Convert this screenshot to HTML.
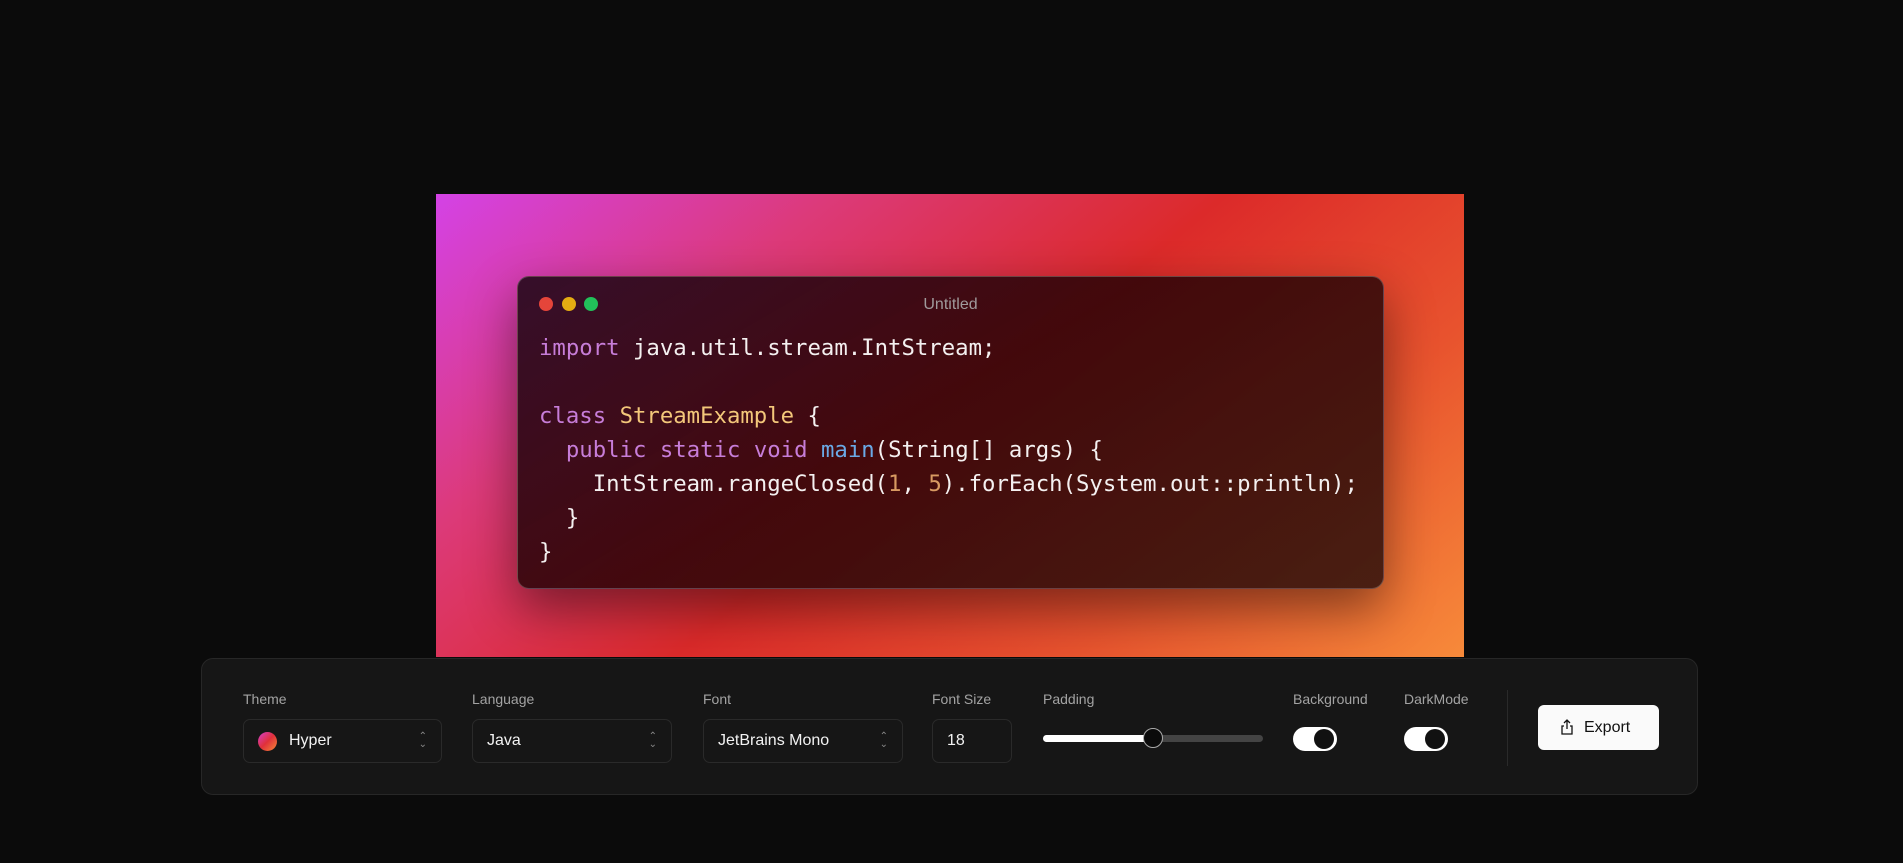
<!DOCTYPE html>
<html><head><meta charset="utf-8"><style>
*{box-sizing:border-box;margin:0;padding:0}
body{width:1903px;height:863px;background:#0b0b0b;position:relative;overflow:hidden;font-family:"Liberation Sans",sans-serif}
.bg{position:absolute;left:436px;top:194px;width:1028px;height:463px;background:linear-gradient(140deg,#d442e6 0%,#dc3a7a 25%,#dc2a2a 50%,#e8532e 75%,#f78a3a 100%)}
.win{position:absolute;left:517px;top:276px;width:867px;height:313px;border-radius:12px;background:linear-gradient(150deg,rgba(40,10,30,.92),rgba(50,5,8,.9) 45%,rgba(55,22,14,.9));border:1px solid rgba(255,255,255,.22);box-shadow:0 20px 50px rgba(0,0,0,.45)}
.dot{position:absolute;top:20px;width:14px;height:14px;border-radius:50%}
.title{position:absolute;top:19px;left:0;right:0;text-align:center;color:#a09a9c;font-size:16px}
pre{position:absolute;left:21px;top:54px;font-family:"DejaVu Sans Mono","Liberation Mono",monospace;font-size:22.3px;line-height:34px;color:#f4f0f0}
.k{color:#c77dd8}.c{color:#f3c77a}.f{color:#6aa9e6}.n{color:#d89a62}
.bar{position:absolute;left:201px;top:658px;width:1497px;height:137px;background:#161616;border:1px solid #272727;border-radius:12px}
.lbl{position:absolute;top:32px;color:#a3a3a3;font-size:14px}
.sel{position:absolute;top:60px;height:44px;border:1px solid #2a2a2a;border-radius:7px;color:#f2f2f2;font-size:16px;line-height:42px;padding-left:14px}
.ar{position:absolute;right:14px;top:0;color:#888;font-size:10px;line-height:8px;padding-top:13px;text-align:center}
.tg{position:absolute;top:68px;width:44px;height:24px;border-radius:12px;background:#fff}
.tg i{position:absolute;right:3px;top:2px;width:20px;height:20px;border-radius:50%;background:#111}
</style></head><body>
<div class="bg"></div>
<div class="win">
<div class="dot" style="left:21px;background:#e5453a"></div>
<div class="dot" style="left:44px;background:#e4ac12"></div>
<div class="dot" style="left:66px;background:#22c05a"></div>
<div class="title">Untitled</div>
<pre><span class="k">import</span> java.util.stream.IntStream;

<span class="k">class</span> <span class="c">StreamExample</span> {
  <span class="k">public</span> <span class="k">static</span> <span class="k">void</span> <span class="f">main</span>(String[] args) {
    IntStream.rangeClosed(<span class="n">1</span>, <span class="n">5</span>).forEach(System.out::println);
  }
}</pre>
</div>
<div class="bar">
<div class="lbl" style="left:41px">Theme</div>
<div class="lbl" style="left:270px">Language</div>
<div class="lbl" style="left:501px">Font</div>
<div class="lbl" style="left:730px">Font Size</div>
<div class="lbl" style="left:841px">Padding</div>
<div class="lbl" style="left:1091px">Background</div>
<div class="lbl" style="left:1202px">DarkMode</div>
<div class="sel" style="left:41px;width:199px;padding-left:45px"><span style="position:absolute;left:14px;top:12px;width:19px;height:19px;border-radius:50%;background:linear-gradient(135deg,#d43fd0,#e0303a,#f48a38)"></span>Hyper<div class="ar">⌃<br>⌄</div></div>
<div class="sel" style="left:270px;width:200px">Java<div class="ar">⌃<br>⌄</div></div>
<div class="sel" style="left:501px;width:200px">JetBrains Mono<div class="ar">⌃<br>⌄</div></div>
<div class="sel" style="left:730px;width:80px">18</div>
<div style="position:absolute;left:841px;top:76px;width:220px;height:7px;border-radius:4px;background:#444"></div>
<div style="position:absolute;left:841px;top:76px;width:110px;height:7px;border-radius:4px;background:#fff"></div>
<div style="position:absolute;left:941px;top:69px;width:20px;height:20px;border-radius:50%;background:#0b0b0b;border:1px solid #aaa"></div>
<div class="tg" style="left:1091px"><i></i></div>
<div class="tg" style="left:1202px"><i></i></div>
<div style="position:absolute;left:1305px;top:31px;width:1px;height:76px;background:#2a2a2a"></div>
<div style="position:absolute;left:1336px;top:46px;width:121px;height:45px;border-radius:6px;background:#fafafa;color:#111;font-size:16px;line-height:45px;padding-left:46px">
<svg style="position:absolute;left:22px;top:14px" width="14" height="16" viewBox="0 0 14 16" fill="none" stroke="#111" stroke-width="1.3"><path d="M7 1v9M4 4l3-3 3 3M4 7H2v8h10V7h-2"/></svg>Export</div>
</div>
</body></html>
